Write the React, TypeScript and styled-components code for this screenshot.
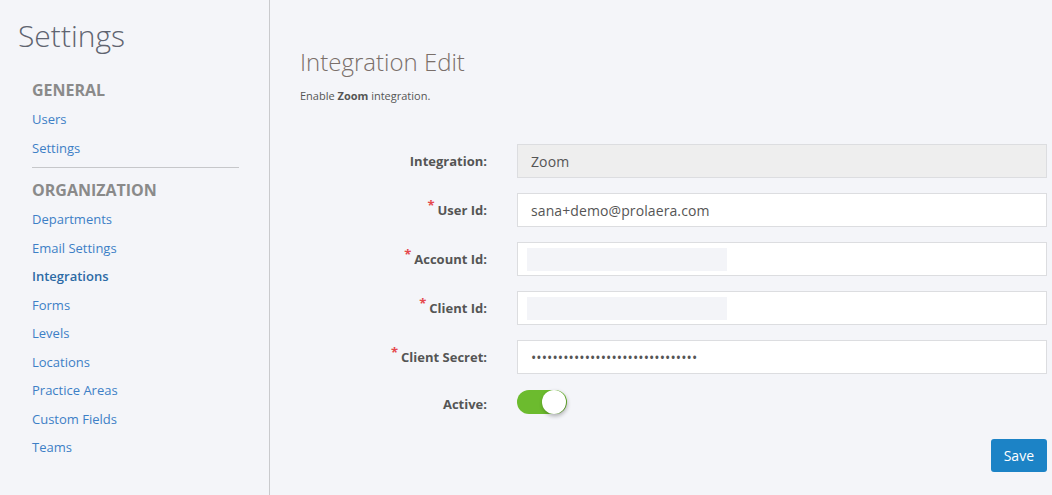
import { FC } from "react";
import styled, { createGlobalStyle } from "styled-components";

const GlobalStyle = createGlobalStyle`
    html, body {
        margin: 0;
        padding: 0;
        background: #f4f5f9;
        font-family: "Open Sans", "Liberation Sans", sans-serif;
    }
    * { box-sizing: border-box; }
`

const Page = styled.div`
    display: flex;
    height: 100vh;
    overflow: hidden;
`

const Sidebar = styled.aside`
    width: 270px;
    flex-shrink: 0;
    border-right: 1px solid #c9cacd;
    padding: 18px 0 0 18px;
`

const SideTitle = styled.h1`
    margin: 0;
    font-size: 30px;
    line-height: 36px;
    font-weight: 300;
    color: #5f6470;
`

const Nav = styled.nav`
    display: flex;
    flex-direction: column;
    padding-left: 14px;
    margin-top: 25px;
`

const NavHeading = styled.h2`
    margin: 0 0 4px;
    font-size: 16px;
    line-height: 22px;
    font-weight: 700;
    color: #8a8a8a;
`

const NavLink = styled.a<{ $active?: boolean }>`
    font-size: 13px;
    line-height: 28.5px;
    color: ${p => (p.$active ? "#2c6aa5" : "#3d7fc6")};
    font-weight: ${p => (p.$active ? 600 : 400)};
    text-decoration: none;
`

const Divider = styled.hr`
    width: 207px;
    margin: 5px 0 11px;
    border: 0;
    border-top: 1px solid #c6c7ca;
`

const Main = styled.main`
    flex: 1;
    padding: 47px 5px 0 30px;
`

const Title = styled.h1`
    margin: 0;
    font-size: 24px;
    line-height: 30px;
    font-weight: 300;
    color: #7a6f6a;
`

const Subtitle = styled.p`
    margin: 11px 0 0;
    font-size: 11px;
    line-height: 16px;
    color: #555;

    b { font-weight: 700; }
`

const Form = styled.form`
    display: grid;
    grid-template-columns: 187px 1fr;
    column-gap: 30px;
    row-gap: 15px;
    margin-top: 40px;
    align-items: center;
`

const Label = styled.label`
    text-align: right;
    font-size: 13px;
    font-weight: 700;
    color: #555;
`

const Req = styled.span`
    color: #e5484d;
    font-size: 13px;
    position: relative;
    top: -5px;
    margin-right: 3px;
`

const FieldBox = styled.div<{ $disabled?: boolean }>`
    height: 34px;
    display: flex;
    align-items: center;
    padding: 0 9px;
    border: 1px solid #dcdde0;
    background: ${p => (p.$disabled ? "#eeeeee" : "#fff")};
`

const TextInput = styled.input`
    flex: 1;
    border: 0;
    outline: none;
    background: transparent;
    padding: 0 4px;
    font-family: inherit;
    font-size: 14px;
    color: #555;
    letter-spacing: 0.1px;
`

const Masked = styled.div`
    width: 200px;
    height: 23px;
    background: #f3f4f8;
`

const Toggle = styled.button<{ $on: boolean }>`
    position: relative;
    width: 50px;
    height: 24px;
    margin-top: 1px;
    border: 0;
    border-radius: 12px;
    background: ${p => (p.$on ? "#6cbb2e" : "#ccc")};
    padding: 0;

    &::after {
        content: "";
        position: absolute;
        top: 0;
        left: ${p => (p.$on ? "25px" : "0")};
        width: 24px;
        height: 24px;
        border-radius: 50%;
        background: #fff;
        box-shadow: 1px 2px 4px rgba(0, 0, 0, 0.3);
    }
`

const Actions = styled.div`
    grid-column: 1 / 3;
    display: flex;
    justify-content: flex-end;
    margin-top: 5px;
`

const SaveButton = styled.button`
    height: 33px;
    padding: 0 13px;
    border: 0;
    border-radius: 3px;
    background: #1c83c6;
    color: #fff;
    font-family: inherit;
    font-size: 14px;
`

const general = ["Users", "Settings"];
const organization = ["Departments", "Email Settings", "Integrations", "Forms", "Levels", "Locations", "Practice Areas", "Custom Fields", "Teams"];

const App: FC = () => {
    return (
        <>
            <GlobalStyle />
            <Page>
                <Sidebar>
                    <SideTitle>Settings</SideTitle>
                    <Nav>
                        <NavHeading>GENERAL</NavHeading>
                        {general.map(item => (
                            <NavLink key={item} href="#">{item}</NavLink>
                        ))}
                        <Divider />
                        <NavHeading>ORGANIZATION</NavHeading>
                        {organization.map(item => (
                            <NavLink key={item} href="#" $active={item === "Integrations"}>{item}</NavLink>
                        ))}
                    </Nav>
                </Sidebar>

                <Main>
                    <Title>Integration Edit</Title>
                    <Subtitle>Enable <b>Zoom</b> integration.</Subtitle>

                    <Form onSubmit={e => e.preventDefault()}>
                        <Label>Integration:</Label>
                        <FieldBox $disabled>
                            <TextInput value="Zoom" disabled readOnly />
                        </FieldBox>

                        <Label><Req>*</Req>User Id:</Label>
                        <FieldBox>
                            <TextInput defaultValue="sana+demo@prolaera.com" />
                        </FieldBox>

                        <Label><Req>*</Req>Account Id:</Label>
                        <FieldBox>
                            <Masked />
                        </FieldBox>

                        <Label><Req>*</Req>Client Id:</Label>
                        <FieldBox>
                            <Masked />
                        </FieldBox>

                        <Label><Req>*</Req>Client Secret:</Label>
                        <FieldBox>
                            <TextInput type="password" defaultValue="xxxxxxxxxxxxxxxxxxxxxxxxxxxxxxx" />
                        </FieldBox>

                        <Label>Active:</Label>
                        <div>
                            <Toggle type="button" $on />
                        </div>

                        <Actions>
                            <SaveButton type="submit">Save</SaveButton>
                        </Actions>
                    </Form>
                </Main>
            </Page>
        </>
    )
}

export default App;
